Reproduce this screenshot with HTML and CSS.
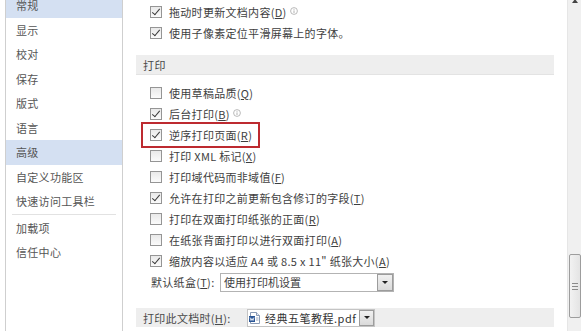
FILE: index.html
```html
<!DOCTYPE html>
<html lang="zh-CN">
<head>
  <meta charset="UTF-8" />
  <title>Word 选项 - 高级</title>
  <link rel="stylesheet" href="styles.css">
</head>
<body>

  <div class="dialog">

    <!-- ==== LEFT NAV ==== -->
    <nav class="nav">
      <ul class="nav-list">
        <li class="nav-item active">常规</li>
        <li class="nav-item">显示</li>
        <li class="nav-item">校对</li>
        <li class="nav-item">保存</li>
        <li class="nav-item">版式</li>
        <li class="nav-item">语言</li>
        <li class="nav-item active">高级</li>
        <li class="nav-item">自定义功能区</li>
        <li class="nav-item">快速访问工具栏</li>
        <li class="nav-sep"></li>
        <li class="nav-item">加载项</li>
        <li class="nav-item">信任中心</li>
      </ul>
    </nav>

    <!-- ==== OPTIONS ==== -->
    <main class="options">
      <div class="opt">
        <span class="cb checked"></span>
        <span class="opt-text">拖动时更新文档内容(<u>D</u>)</span>
        <svg class="info" viewBox="0 0 8 8" aria-hidden="true"><circle cx="4" cy="4" r="3.4" fill="none" stroke="#a8a8a8" stroke-width="0.8"/><line x1="4" y1="3.4" x2="4" y2="6" stroke="#a8a8a8" stroke-width="0.9"/><circle cx="4" cy="2.3" r="0.5" fill="#a8a8a8"/></svg>
      </div>
      <div class="opt">
        <span class="cb checked"></span>
        <span class="opt-text">使用子像素定位平滑屏幕上的字体。</span>
      </div>

      <div class="section">打印</div>

      <div class="group">
        <div class="opt">
          <span class="cb"></span>
          <span class="opt-text">使用草稿品质(<u>Q</u>)</span>
        </div>
        <div class="opt">
          <span class="cb checked"></span>
          <span class="opt-text">后台打印(<u>B</u>)</span>
          <svg class="info" viewBox="0 0 8 8" aria-hidden="true"><circle cx="4" cy="4" r="3.4" fill="none" stroke="#a8a8a8" stroke-width="0.8"/><line x1="4" y1="3.4" x2="4" y2="6" stroke="#a8a8a8" stroke-width="0.9"/><circle cx="4" cy="2.3" r="0.5" fill="#a8a8a8"/></svg>
        </div>
        <div class="opt marked">
          <span class="cb checked"></span>
          <span class="opt-text">逆序打印页面(<u>R</u>)</span>
        </div>
        <div class="opt">
          <span class="cb"></span>
          <span class="opt-text">打印 XML 标记(<u>X</u>)</span>
        </div>
        <div class="opt">
          <span class="cb"></span>
          <span class="opt-text">打印域代码而非域值(<u>F</u>)</span>
        </div>
        <div class="opt">
          <span class="cb checked"></span>
          <span class="opt-text">允许在打印之前更新包含修订的字段(<u>T</u>)</span>
        </div>
        <div class="opt">
          <span class="cb"></span>
          <span class="opt-text">打印在双面打印纸张的正面(<u>R</u>)</span>
        </div>
        <div class="opt">
          <span class="cb"></span>
          <span class="opt-text">在纸张背面打印以进行双面打印(<u>A</u>)</span>
        </div>
        <div class="opt">
          <span class="cb checked"></span>
          <span class="opt-text">缩放内容以适应 A4 或 8.5 x 11" 纸张大小(<u>A</u>)</span>
        </div>

        <div class="field-row">
          <span class="field-label">默认纸盒(<u>T</u>):</span>
          <div class="select tray">
            <span class="select-text">使用打印机设置</span>
            <span class="select-btn"></span>
          </div>
        </div>
      </div>

      <div class="section doc-row">
        <span class="field-label">打印此文档时(<u>H</u>):</span>
        <div class="select doc">
          <svg class="doc-icon" viewBox="0 0 11 12" aria-hidden="true">
            <path d="M1.5 0.5h6l3 3v8h-9z" fill="#fff" stroke="#8a9bb5"/>
            <path d="M7.5 0.5v3h3" fill="#e4eaf3" stroke="#8a9bb5"/>
            <rect x="0" y="4" width="6" height="6" fill="#2b5797"/>
            <polyline points="1,5.5 2,8.5 3,6.5 4,8.5 5,5.5" fill="none" stroke="#fff" stroke-width="0.8"/>
            <line x1="7" y1="6" x2="9.5" y2="6" stroke="#9aa9c0"/>
            <line x1="7" y1="8" x2="9.5" y2="8" stroke="#9aa9c0"/>
          </svg>
          <span class="select-text">经典五笔教程.pdf</span>
          <span class="select-btn"></span>
        </div>
      </div>
    </main>

    <!-- ==== SCROLLBAR ==== -->
    <div class="scrollbar">
      <span class="scroll-up"></span>
      <span class="scroll-thumb"><span class="grip"></span></span>
    </div>

  </div>

</body>
</html>
```

FILE: styles.css
```css
/* Reset */
* {
  margin: 0;
  padding: 0;
  box-sizing: border-box;
}

html, body {
  width: 581px;
  height: 331px;
  overflow: hidden;
  background: #ffffff;
  color: #3e3e3e;
  font-family: "Noto Sans CJK SC", "Microsoft YaHei", sans-serif;
  font-size: 11px;
}

u {
  text-decoration: underline;
  text-underline-offset: 1px;
}

.dialog {
  display: flex;
  height: 331px;
}

/* Left nav */
.nav {
  width: 118px;
  margin-left: 5px;
  border: 1px solid #cfcfcf;
  border-top: none;
  border-bottom: none;
  flex-shrink: 0;
  overflow: hidden;
}

.nav-list {
  list-style: none;
  margin-top: -7px;
}

.nav-item {
  height: 24.5px;
  line-height: 24.5px;
  padding-left: 10px;
  color: #555555;
  letter-spacing: 0.3px;
}

.nav-item.active {
  background: #d4e0f2;
}

.nav-sep {
  height: 1px;
  margin: 0 6px 1px;
  background: #e2e2e2;
}

/* Options area */
.options {
  width: 418px;
  margin-left: 13px;
  padding-top: 1px;
  flex-shrink: 0;
}

.opt {
  position: relative;
  display: flex;
  align-items: center;
  height: 21px;
  padding-left: 14px;
}

.opt-text {
  margin-left: 7px;
  letter-spacing: 0.3px;
  white-space: nowrap;
}

/* checkbox */
.cb {
  width: 12px;
  height: 12px;
  border: 1px solid #959595;
  background: linear-gradient(#e9e9e9, #fbfbfb);
  flex-shrink: 0;
  position: relative;
}

.cb.checked::after {
  content: "";
  position: absolute;
  left: 3px;
  top: 0px;
  width: 3px;
  height: 7px;
  border: solid #3a3a3a;
  border-width: 0 1.4px 1.4px 0;
  transform: rotate(40deg);
}

.info {
  width: 8px;
  height: 8px;
  margin-left: 3px;
  margin-top: -2px;
}

/* red annotation frame */
.marked::after {
  content: "";
  position: absolute;
  left: 5px;
  top: -2px;
  width: 115px;
  height: 22px;
  border: 2px solid #bd2a30;
}

/* Section bands */
.section {
  height: 20px;
  margin-top: 12px;
  padding-left: 7px;
  display: flex;
  align-items: center;
  background: #eeeeee;
  border-bottom: 1px solid #e3e3e3;
  color: #4a4a4a;
  letter-spacing: 0.5px;
}

.group {
  margin-top: 7px;
}

/* select rows */
.field-row {
  display: flex;
  align-items: center;
  height: 22px;
  padding-left: 15px;
}

.field-label {
  width: 69px;
  white-space: nowrap;
  letter-spacing: 0.3px;
  flex-shrink: 0;
}

.select {
  display: flex;
  align-items: center;
  height: 19px;
  border: 1px solid #b3b3b3;
  background: #ffffff;
  flex-shrink: 0;
}

.select-text {
  flex-grow: 1;
  padding-left: 3px;
  white-space: nowrap;
}

.select-btn {
  position: relative;
  width: 16px;
  height: 17px;
  border: 1px solid #9c9c9c;
  background: linear-gradient(#f1f1f1, #dadada);
  flex-shrink: 0;
}

.select-btn::after {
  content: "";
  position: absolute;
  left: 4px;
  top: 6px;
  border-left: 3px solid transparent;
  border-right: 3px solid transparent;
  border-top: 3px solid #222;
}

.tray {
  width: 174px;
}

.doc-row {
  margin-top: 15px;
  height: 19px;
  border-bottom: none;
}

.doc-row .field-label {
  width: 104px;
}

.doc {
  width: 128px;
  height: 18px;
  border-color: #c4c4c4;
}

.doc .select-text {
  font-size: 11px;
  padding-left: 5px;
  padding-right: 2px;
  color: #333;
}

.doc .select-btn {
  height: 16px;
  width: 15px;
}

.doc .select-btn::after {
  top: 5px;
}

.doc-icon {
  width: 11px;
  height: 12px;
  margin-left: 1px;
  flex-shrink: 0;
}

/* Scrollbar */
.scrollbar {
  margin-left: auto;
  width: 14px;
  background: #f0f0f0;
  border-left: 1px solid #e6e6e6;
  position: relative;
  display: flex;
  flex-direction: column;
  align-items: center;
}

.scroll-up {
  margin-top: -1px;
  border-left: 3px solid transparent;
  border-right: 3px solid transparent;
  border-bottom: 4px solid #444;
}

.scroll-thumb {
  margin-top: 251px;
  width: 12px;
  height: 64px;
  border: 1px solid #9d9d9d;
  border-radius: 2px;
  background: linear-gradient(90deg, #f2f2f2, #e4e4e4);
  display: flex;
  align-items: center;
  justify-content: center;
}

.grip {
  width: 6px;
  height: 7px;
  background: repeating-linear-gradient(#8a8a8a 0 1px, transparent 1px 3px);
}
```
